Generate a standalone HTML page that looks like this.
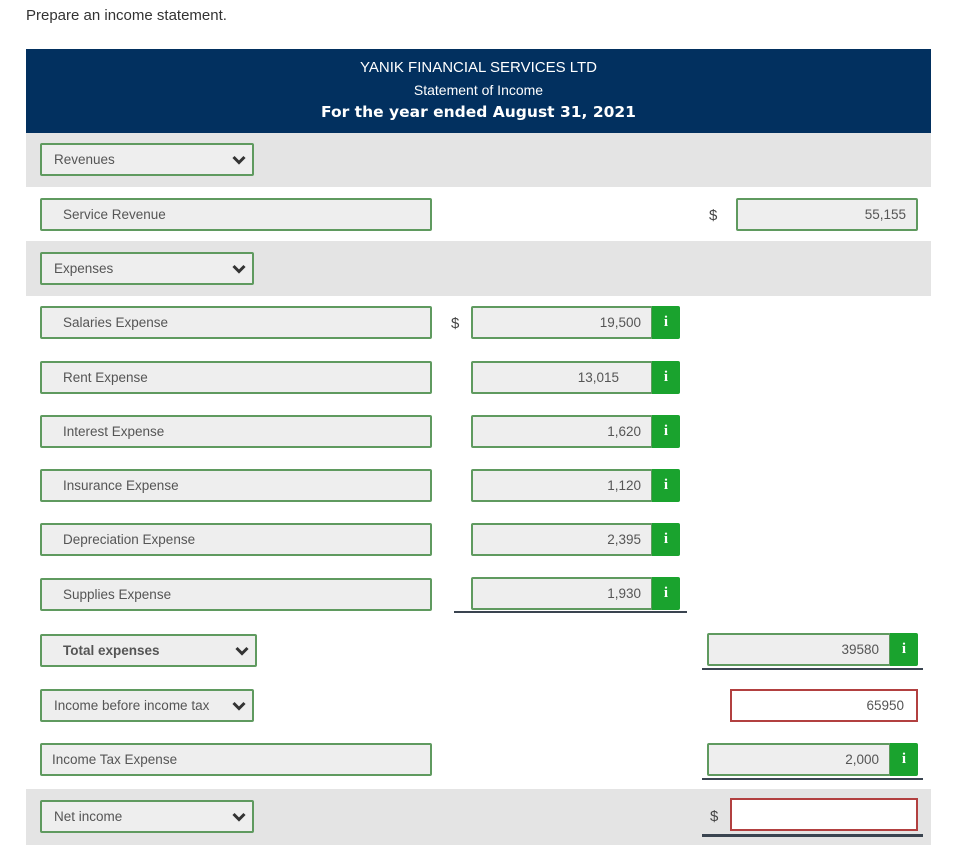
<!DOCTYPE html>
<html><head><meta charset="utf-8"><style>
body{margin:0;width:965px;height:853px;background:#fff;font-family:"Liberation Sans",sans-serif;position:relative;overflow:hidden;color:#333}
.a{position:absolute;box-sizing:border-box}
.gray{background:#e4e4e4;left:26px;width:905px}
.box{border:2px solid #5f9a5f;border-radius:2px;background:#eeeeee;height:33px;font-size:13.5px;color:#555;line-height:30px}
.lbl{padding-left:21px}
.sel{padding-left:12px}
.chev{position:absolute;right:6px;top:10px}
.num{text-align:right;padding-right:10px}
.info{background:#1aa32e;color:#fff;font-family:"Liberation Serif",serif;font-weight:bold;font-size:15px;text-align:center;line-height:33px;height:33px;width:28px;border-radius:0 2px 2px 0}
.red{border:2px solid #b24040;background:#fff;height:33px;font-size:13.5px;color:#555;line-height:30px;text-align:right;padding-right:12px}
.ds{font-size:15px;color:#444}
.ln{height:2px;background:#3a4450}
</style></head><body>
<div class="a" style="left:26px;top:7px;font-size:15px;color:#333">Prepare an income statement.</div>
<div class="a" style="left:26px;top:49px;width:905px;height:84px;background:#02305f;color:#fff;text-align:center">
<div style="margin-top:10px;font-size:15px">YANIK FINANCIAL SERVICES LTD</div>
<div style="margin-top:6px;font-size:14px">Statement of Income</div>
<div style="margin-top:5px;font-size:15.5px;font-weight:bold;font-family:'DejaVu Sans',sans-serif">For the year ended August 31, 2021</div>
</div>
<div class="a gray" style="top:133px;height:54px"></div>
<div class="a gray" style="top:241px;height:55px"></div>
<div class="a gray" style="top:789px;height:56px"></div>

<svg width="0" height="0" style="position:absolute"><defs><symbol id="cv" viewBox="0 0 14 10"><path d="M1.5 2 L7 7.5 L12.5 2" stroke="#333" stroke-width="3" fill="none"/></symbol></defs></svg>

<div class="a box sel" style="left:40px;top:143px;width:214px">Revenues<svg class="chev" width="14" height="10"><use href="#cv"/></svg></div>
<div class="a box lbl" style="left:40px;top:198px;width:392px">Service Revenue</div>
<div class="a ds" style="left:709px;top:207px">$</div>
<div class="a box num" style="left:736px;top:198px;width:182px">55,155</div>

<div class="a box sel" style="left:40px;top:252px;width:214px">Expenses<svg class="chev" width="14" height="10"><use href="#cv"/></svg></div>

<div class="a box lbl" style="left:40px;top:306px;width:392px">Salaries Expense</div>
<div class="a ds" style="left:451px;top:315px">$</div>
<div class="a box num" style="left:471px;top:306px;width:182px">19,500</div><div class="a info" style="left:652px;top:306px">i</div>

<div class="a box lbl" style="left:40px;top:361px;width:392px">Rent Expense</div>
<div class="a box num" style="left:471px;top:361px;width:182px;padding-right:32px">13,015</div><div class="a info" style="left:652px;top:361px">i</div>

<div class="a box lbl" style="left:40px;top:415px;width:392px">Interest Expense</div>
<div class="a box num" style="left:471px;top:415px;width:182px">1,620</div><div class="a info" style="left:652px;top:415px">i</div>

<div class="a box lbl" style="left:40px;top:469px;width:392px">Insurance Expense</div>
<div class="a box num" style="left:471px;top:469px;width:182px">1,120</div><div class="a info" style="left:652px;top:469px">i</div>

<div class="a box lbl" style="left:40px;top:523px;width:392px">Depreciation Expense</div>
<div class="a box num" style="left:471px;top:523px;width:182px">2,395</div><div class="a info" style="left:652px;top:523px">i</div>

<div class="a box lbl" style="left:40px;top:578px;width:392px">Supplies Expense</div>
<div class="a box num" style="left:471px;top:577px;width:182px">1,930</div><div class="a info" style="left:652px;top:577px">i</div>
<div class="a ln" style="left:454px;top:611px;width:233px"></div>

<div class="a box lbl" style="left:40px;top:634px;width:217px;font-weight:bold">Total expenses<svg class="chev" width="14" height="10"><use href="#cv"/></svg></div>
<div class="a box num" style="left:707px;top:633px;width:184px">39580</div><div class="a info" style="left:890px;top:633px">i</div>
<div class="a ln" style="left:702px;top:668px;width:221px"></div>

<div class="a box sel" style="left:40px;top:689px;width:214px">Income before income tax<svg class="chev" width="14" height="10"><use href="#cv"/></svg></div>
<div class="a red" style="left:730px;top:689px;width:188px">65950</div>

<div class="a box sel" style="left:40px;top:743px;width:392px;padding-left:10px">Income Tax Expense</div>
<div class="a box num" style="left:707px;top:743px;width:184px">2,000</div><div class="a info" style="left:890px;top:743px">i</div>
<div class="a ln" style="left:702px;top:778px;width:221px"></div>

<div class="a box sel" style="left:40px;top:800px;width:214px">Net income<svg class="chev" width="14" height="10"><use href="#cv"/></svg></div>
<div class="a ds" style="left:710px;top:808px">$</div>
<div class="a red" style="left:730px;top:798px;width:188px"></div>
<div class="a ln" style="left:702px;top:834px;width:221px;height:3px"></div>
</body></html>
